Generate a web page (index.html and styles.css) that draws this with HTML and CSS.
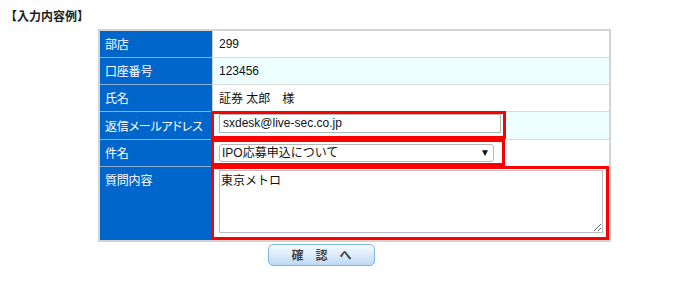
FILE: index.html
```html
<!DOCTYPE html>
<html lang="ja">
<head>
<meta charset="utf-8">
<title>入力内容例</title>
<link rel="stylesheet" href="styles.css">
</head>
<body>
<div class="page">
  <h2 class="title">【入力内容例】</h2>
  <table class="form">
    <tr>
      <th>部店</th>
      <td>299</td>
    </tr>
    <tr class="alt">
      <th>口座番号</th>
      <td>123456</td>
    </tr>
    <tr>
      <th>氏名</th>
      <td>証券 太郎　様</td>
    </tr>
    <tr class="alt">
      <th>返信メールアドレス</th>
      <td class="field">
        <div class="hl hl-mail"><input class="text" type="text" value="sxdesk@live-sec.co.jp"></div>
      </td>
    </tr>
    <tr>
      <th>件名</th>
      <td class="field">
        <div class="hl hl-select">
          <div class="select-wrap">
            <select class="select"><option>IPO応募申込について</option></select>
            <span class="arrow">▼</span>
          </div>
        </div>
      </td>
    </tr>
    <tr class="tall">
      <th class="top">質問内容</th>
      <td class="field">
        <div class="hl hl-area"><textarea class="area">東京メトロ</textarea></div>
      </td>
    </tr>
  </table>
  <div class="actions">
    <button class="confirm" type="button">確　認　へ</button>
  </div>
</div>
</body>
</html>
```

FILE: styles.css
```css
html, body {
  margin: 0;
  padding: 0;
  background: #fff;
}

.page {
  padding: 9px 0 0 2px;
  font-family: "Liberation Sans", "Noto Sans CJK JP", sans-serif;
  font-size: 12px;
  color: #222;
}

.title {
  margin: 0;
  padding-left: 3px;
  font-size: 12px;
  line-height: 16px;
  font-weight: bold;
  color: #222;
}

.form {
  margin: 4px 0 0 96px;
  width: 513px;
  border-collapse: collapse;
  border: 2px solid #d3d3d3;
}

.form th,
.form td {
  height: 27px;
  padding: 0;
  box-sizing: border-box;
  vertical-align: middle;
  text-align: left;
}

.form th {
  width: 118px;
  padding-left: 5px;
  background: #0066cc;
  color: #fff;
  font-weight: normal;
  font-size: 12px;
  font-feature-settings: "palt";
  border-top: 1px solid #8fb0d6;
  border-right: 1px solid #c9d3dc;
  letter-spacing: -0.2px;
}

.form td {
  padding-left: 6px;
  border-top: 1px solid #dcdcdc;
  color: #111;
}

.form tr.alt td {
  background: #eeffff;
}

.form tr.tall th,
.form tr.tall td {
  height: 73px;
}

.form th.top {
  vertical-align: top;
  padding-top: 4px;
}

.form td.field {
  padding-left: 0;
  vertical-align: top;
}

.hl {
  width: fit-content;
  border: 3px solid #ff0000;
  margin-left: -2px;
  margin-top: -1px;
  position: relative;
}

.hl-mail {
  padding: 0 2px 3px 5px;
}

.text {
  display: block;
  width: 282px;
  height: 19px;
  box-sizing: border-box;
  margin: 0;
  padding: 0 3px;
  border: 1px solid #b4b4b4;
  font-family: "Liberation Sans", "Noto Sans CJK JP", sans-serif;
  font-size: 12px;
  color: #111;
  background: #fff;
}

.hl-select {
  padding: 2px 8px 1px 5px;
}

.select-wrap {
  position: relative;
  width: 275px;
}

.select {
  display: block;
  width: 275px;
  height: 18px;
  box-sizing: border-box;
  margin: 0;
  padding: 0 2px;
  border: 1px solid #b8b8b8;
  border-radius: 3px;
  appearance: none;
  -webkit-appearance: none;
  background: #fff;
  font-family: "Liberation Sans", "Noto Sans CJK JP", sans-serif;
  font-size: 12px;
  color: #111;
}

.arrow {
  position: absolute;
  right: 4px;
  top: 3px;
  font-size: 10px;
  line-height: 12px;
  color: #111;
  pointer-events: none;
}

.hl-area {
  padding: 1px 3px 4px 5px;
}

.area {
  display: block;
  width: 384px;
  height: 63px;
  box-sizing: border-box;
  margin: 0;
  padding: 1px 1px;
  border: 1px solid #b8c0c4;
  font-family: "Noto Sans CJK JP", "Liberation Sans", sans-serif;
  font-size: 12px;
  line-height: 15px;
  color: #111;
  background: #fff;
}

.actions {
  padding: 2px 0 0 266px;
}

.confirm {
  width: 107px;
  height: 22px;
  margin: 0;
  padding: 0;
  border: 1px solid #7bb6e6;
  border-radius: 5px;
  background: linear-gradient(#f6faff, #dcebfb 50%, #bcd9f6);
  font-family: "Noto Sans CJK JP", sans-serif;
  font-size: 12px;
  font-weight: bold;
  color: #444;
  line-height: 20px;
}
```
